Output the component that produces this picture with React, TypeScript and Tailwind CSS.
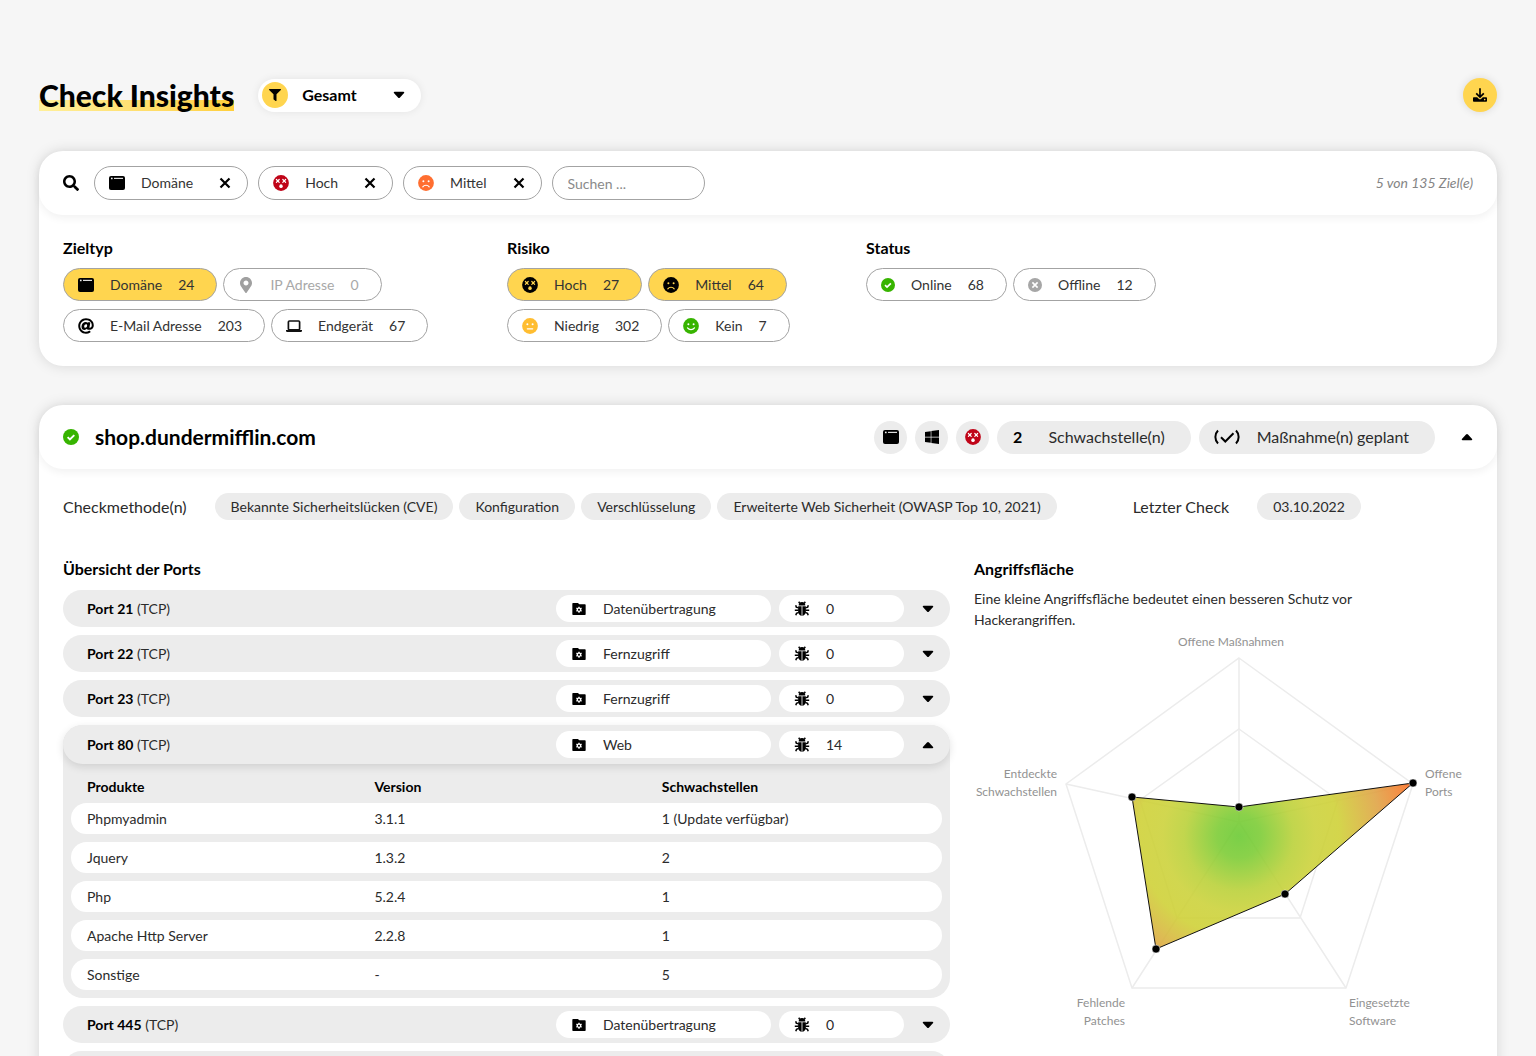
import { useState, type ReactNode } from "react";
import { FaAt, FaFilter, FaMapMarkerAlt, FaSearch, FaWindows } from "react-icons/fa";
import { RiFolderSettingsFill } from "react-icons/ri";
import clsx from "clsx";

type Mood = "high" | "medium" | "low" | "none";

function WindowIcon() {
  return (
    <svg viewBox="0 0 16 16" className="w-4 h-4" aria-hidden="true">
      <rect x="0" y="1" width="16" height="14" rx="2" fill="#000" />
      <circle cx="2.8" cy="3.4" r="0.9" fill="#eee" />
      <path d="M5 3.4h9" stroke="#ddd" strokeWidth="1.2" />
    </svg>
  );
}

function LaptopIcon() {
  return (
    <svg viewBox="0 0 16 16" className="w-4 h-4" aria-hidden="true">
      <rect x="2.4" y="3" width="11.2" height="8.8" rx="1" fill="none" stroke="#111" strokeWidth="1.7" />
      <path d="M0 12h16v.8a1.2 1.2 0 0 1-1.2 1.2H1.2A1.2 1.2 0 0 1 0 12.8z" fill="#111" />
    </svg>
  );
}

function Face({ mood, fill, ink = "#fff" }: { mood: Mood; fill: string; ink?: string }) {
  return (
    <svg viewBox="0 0 16 16" className="w-4 h-4" aria-hidden="true">
      <circle cx="8" cy="8" r="7.9" fill={fill} />
      {mood === "high" ? (
        <g stroke={ink} strokeWidth="1.2" strokeLinecap="round">
          <path d="M3.4 4.5l2.8 2.8M6.2 4.5L3.4 7.300M9.8 4.5l2.8 2.8M12.600 4.5L9.800 7.300" />
          <ellipse cx="8" cy="11.2" rx="1.7" ry="1.9" fill={ink} stroke="none" />
        </g>
      ) : (
        <g fill={ink}>
          <circle cx="5.4" cy="6.2" r="1" />
          <circle cx="10.6" cy="6.2" r="1" />
        </g>
      )}
      <g fill="none" stroke={ink} strokeWidth="1.2" strokeLinecap="round">
        {mood === "medium" && <path d="M4.8 11.8c1.600-2.100 4.800-2.100 6.400 0" />}
        {mood === "low" && <path d="M5.3 10.800h5.400" />}
        {mood === "none" && <path d="M4.5 9.800c1.700 2.300 5.300 2.300 7 0" />}
      </g>
    </svg>
  );
}

function StatusDot({ online, className = "w-4 h-4" }: { online: boolean; className?: string }) {
  return (
    <svg viewBox="0 0 16 16" className={className} aria-hidden="true">
      <circle cx="8" cy="8" r="8" fill={online ? "#37b400" : "#a6a6a6"} />
      <path
        d={online ? "M4.600 8.200l2.300 2.300 4.400-4.400" : "M5 5l6 6M11 5l-6 6"}
        fill="none"
        stroke="#fff"
        strokeWidth="1.9"
      />
    </svg>
  );
}

function BugIcon() {
  return (
    <svg viewBox="0 0 16 16" className="w-4 h-4" aria-hidden="true">
      <path d="M4.7 4.4a3.300 3.300 0 0 1 6.600 0z" />
      <path d="M4.2 5.200h3.400v9.700C5.400 14.600 4.100 12.600 4.100 10zM8.400 5.200h3.400l.1 4.800c0 2.600-1.300 4.600-3.500 4.900z" />
      <path
        d="M5.600 2L4.700.8M10.400 2l.9-1.200M4.600 6.900L2.300 6.100 1.700 4.300M4.400 9.200H.8M4.800 11.400l-2.300.9-.7 2M11.400 6.900l2.300-.8.6-1.800M11.600 9.200h3.600M11.200 11.400l2.300.9.7 2"
        fill="none"
        stroke="#000"
        strokeWidth="1.500"
      />
    </svg>
  );
}

function Caret({ up }: { up?: boolean }) {
  return (
    <svg viewBox="0 0 12 8" className="w-3 h-2" aria-hidden="true">
      <path
        d={
          up
            ? "M1.500 7.200h9a.8.8 0 0 0 .6-1.300L7 1.400a1.400 1.400 0 0 0-2 0L.9 5.900a.8.8 0 0 0 .6 1.300z"
            : "M1.500.8h9a.8.8 0 0 1 .6 1.300L7 6.600a1.400 1.400 0 0 1-2 0L.9 2.100A.8.8 0 0 1 1.500.8z"
        }
      />
    </svg>
  );
}

function DownloadIcon() {
  return (
    <svg viewBox="0 0 16 16" className="w-4 h-4" aria-hidden="true">
      <path d="M1.800 10.200h3.400l1.500 1.500a1.900 1.900 0 0 0 2.600 0l1.500-1.500h3.400c.5 0 .8.400.8.800v3c0 .5-.3.800-.8.800H1.800c-.5 0-.8-.3-.8-.8v-3c0-.4.300-.8.800-.8z" />
      <circle cx="12.700" cy="12.600" r=".8" fill="#ffd54f" />
      <path d="M8 1.200v8.600M4.200 6.400L8 10.100l3.800-3.700" fill="none" stroke="#000" strokeWidth="1.700" />
    </svg>
  );
}

function PlannedIcon() {
  return (
    <svg viewBox="0 0 28 18" className="w-7 h-[18px]" fill="none" stroke="#000" strokeWidth="2" aria-hidden="true">
      <path d="M5 2.500C1.500 6 1.500 12 5 15.500M23 2.500c3.500 3.500 3.500 9.500 0 13M8 9.200l4.300 4.300L20.500 5.300" />
    </svg>
  );
}

function ActiveFilter({ icon, label, onRemove }: { icon: ReactNode; label: string; onRemove: () => void }) {
  return (
    <span className="flex items-center h-[34px] pl-[14px] pr-4 rounded-full border border-[#a3a3a3]">
      {icon}
      <span className="ml-4 mr-[26px] text-[#333]">{label}</span>
      <button type="button" onClick={onRemove} aria-label={`${label} entfernen`} className="grid place-items-center w-3 h-4">
        <svg viewBox="0 0 12 12" className="w-3 h-3" aria-hidden="true">
          <path d="M1.500 1.500l9 9M10.500 1.500l-9 9" stroke="#000" strokeWidth="2.200" />
        </svg>
      </button>
    </span>
  );
}

function Chip({
  icon,
  label,
  count,
  active,
  disabled,
  onClick,
}: {
  icon: ReactNode;
  label: string;
  count: number;
  active?: boolean;
  disabled?: boolean;
  onClick?: () => void;
}) {
  return (
    <button
      type="button"
      disabled={disabled}
      aria-pressed={active}
      onClick={onClick}
      className={clsx(
        "flex items-center gap-4 h-[33px] pl-[14px] pr-[22px] rounded-full border border-[#a3a3a3]",
        active && "bg-[#ffd54f]",
        disabled ? "text-[#a8a8a8]" : "text-[#333]",
      )}
    >
      {icon}
      <span>{label}</span>
      <span>{count}</span>
    </button>
  );
}

function FilterGroup({ title, children }: { title: string; children: ReactNode }) {
  return (
    <section>
      <h2 className="text-base font-bold leading-6 text-black">{title}</h2>
      <div className="mt-2 flex flex-col gap-2">{children}</div>
    </section>
  );
}

const row = "flex flex-wrap gap-[6px]";

function Port({ port, service, count, open }: { port: number; service: string; count: number; open?: boolean }) {
  return (
    <div
      className={clsx(
        "flex items-center gap-2 pl-6 pr-4 rounded-[20px] bg-[#ececec]",
        open ? "h-[39px] shadow-[0_3px_8px_rgba(0,0,0,0.12)]" : "h-[37px]",
      )}
    >
      <h3 className="flex-1">
        <span className="font-bold text-black">Port {port}</span> (TCP)
      </h3>
      <span className="flex items-center gap-4 w-[215px] h-[27px] pl-[15px] rounded-full bg-white">
        <RiFolderSettingsFill className="w-4 h-4 text-black" />
        {service}
      </span>
      <span className="flex items-center gap-4 w-[125px] h-[27px] pl-[15px] rounded-full bg-white">
        <BugIcon />
        {count}
      </span>
      <button type="button" aria-expanded={!!open} aria-label={`Port ${port}`} className="grid place-items-center w-3 h-4 ml-[10px]">
        <Caret up={open} />
      </button>
    </div>
  );
}

const products = [
  ["Phpmyadmin", "3.1.1", "1 (Update verfügbar)"],
  ["Jquery", "1.3.2", "2"],
  ["Php", "5.2.4", "1"],
  ["Apache Http Server", "2.2.8", "1"],
  ["Sonstige", "-", "5"],
];

function ProductTable() {
  return (
    <table className="w-full table-fixed border-separate border-spacing-x-0 border-spacing-y-2 text-left">
      <thead>
        <tr className="h-[23px] align-bottom leading-4 text-black">
          <th className="w-[33%] pl-4 font-bold">Produkte</th>
          <th className="w-[33%] pl-4 font-bold">Version</th>
          <th className="pl-4 font-bold">Schwachstellen</th>
        </tr>
      </thead>
      <tbody>
        {products.map(([name, version, issues]) => (
          <tr key={name} className="h-[31px]">
            <td className="pl-4 rounded-l-full bg-white">{name}</td>
            <td className="pl-4 bg-white">{version}</td>
            <td className="pl-4 rounded-r-full bg-white">{issues}</td>
          </tr>
        ))}
      </tbody>
    </table>
  );
}

const points = [
  [265, 177],
  [439, 153],
  [311, 264],
  [182, 319],
  [158, 167],
];

function Radar() {
  return (
    <svg viewBox="0 0 499 406" className="w-full" role="img" aria-label="Angriffsfläche">
      <defs>
        <radialGradient id="risk" gradientUnits="userSpaceOnUse" cx="265" cy="206" r="182">
          <stop offset="0" stopColor="#68c92f" />
          <stop offset="0.12" stopColor="#7acb31" />
          <stop offset="0.3" stopColor="#b9d035" />
          <stop offset="0.42" stopColor="#cbd137" />
          <stop offset="0.55" stopColor="#ced033" />
          <stop offset="0.78" stopColor="#dfa141" />
          <stop offset="1" stopColor="#ff6a1f" />
        </radialGradient>
      </defs>
      <g fill="none" stroke="#ececec" strokeWidth="1.500">
        <path d="M265 28L439 154 372 358H158L92 154z" />
        <path d="M265 99L364 170 326 288H203L166 170z" />
        <path d="M265 192V28M265 192l174-38M265 192l107 166M265 192L158 358M265 192L92 154" />
      </g>
      <polygon
        points={points.map((p) => p.join(",")).join(" ")}
        fill="url(#risk)"
        fillOpacity="0.88"
        stroke="#111"
        strokeWidth="1"
      />
      {points.map(([x, y]) => (
        <circle key={x} cx={x} cy={y} r="4" stroke="#fff" strokeWidth="0.500" />
      ))}
      <g className="text-xs" fill="#929292">
        <text x="257" y="16" textAnchor="middle">Offene Maßnahmen</text>
        <text x="451" y="148">Offene</text>
        <text x="451" y="166">Ports</text>
        <text x="375" y="377">Eingesetzte</text>
        <text x="375" y="395">Software</text>
        <text x="151" y="377" textAnchor="end">Fehlende</text>
        <text x="151" y="395" textAnchor="end">Patches</text>
        <text x="83" y="148" textAnchor="end">Entdeckte</text>
        <text x="83" y="166" textAnchor="end">Schwachstellen</text>
      </g>
    </svg>
  );
}

const methods = [
  "Bekannte Sicherheitslücken (CVE)",
  "Konfiguration",
  "Verschlüsselung",
  "Erweiterte Web Sicherheit (OWASP Top 10, 2021)",
];

const card = "rounded-3xl bg-white shadow-[0_0_14px_rgba(0,0,0,0.13)]";
const cardHeader = "flex items-center h-16 px-6 rounded-3xl shadow-[0_3px_8px_rgba(0,0,0,0.06)]";
const circle = "grid place-items-center w-[33px] h-[33px] rounded-full bg-[#ececec]";
const tag = "flex items-center h-[27px] px-4 rounded-full bg-[#ececec]";

const activeFilters = [
  { label: "Domäne", icon: <WindowIcon /> },
  { label: "Hoch", icon: <Face mood="high" fill="#c00418" /> },
  { label: "Mittel", icon: <Face mood="medium" fill="#ff6e30" /> },
];

export default function App() {
  const [filters, setFilters] = useState(activeFilters);
  const has = (label: string) => filters.some((f) => f.label === label);
  const toggle = (label: string) =>
    setFilters(activeFilters.filter((f) => (f.label === label ? !has(label) : has(f.label))));

  return (
    <div className="min-h-screen bg-[#f6f6f6] px-[39px] pt-[78px] pb-10 font-['Lato',sans-serif] text-sm text-[#2b2b2b]">
      <header className="flex items-center h-[34px]">
        <h1 className="text-[30px] leading-8 font-black text-black bg-linear-to-r from-[#fff09a] to-[#ffcf3a] bg-[length:100%_11px] bg-bottom bg-no-repeat">
          Check Insights
        </h1>
        <label className="relative flex items-center ml-6 h-[33px] w-[163px] rounded-full bg-white text-black shadow-[0_0_8px_rgba(0,0,0,0.08)]">
          <span className="grid place-items-center ml-1 w-[26px] h-[26px] rounded-full bg-[#ffd54f]">
            <FaFilter className="w-3 h-3" />
          </span>
          <select aria-label="Filter" className="flex-1 h-full pl-[14px] appearance-none text-base font-bold">
            <option>Gesamt</option>
          </select>
          <span className="absolute right-4 pointer-events-none">
            <Caret />
          </span>
        </label>
        <button
          type="button"
          aria-label="Herunterladen"
          className="ml-auto grid place-items-center w-[34px] h-[34px] rounded-full bg-[#ffd54f] shadow-[0_0_8px_rgba(0,0,0,0.12)]"
        >
          <DownloadIcon />
        </button>
      </header>

      <section className={clsx(card, "mt-[39px]")}>
        <div className={clsx(cardHeader, "gap-[10px]")}>
          <FaSearch className="w-4 h-4 mr-[5px] text-black" />
          {filters.map((f) => (
            <ActiveFilter key={f.label} icon={f.icon} label={f.label} onRemove={() => toggle(f.label)} />
          ))}
          <input
            type="text"
            aria-label="Suchen"
            placeholder="Suchen ..."
            className="w-[153px] h-[34px] px-[15px] rounded-full border border-[#a3a3a3] placeholder:text-[#8a8a8a]"
          />
          <span className="ml-auto italic text-[#858585]">5 von 135 Ziel(e)</span>
        </div>
        <div className="grid grid-cols-[444fr_359fr_607fr] px-6 pt-[21px] pb-6">
          <FilterGroup title="Zieltyp">
            <div className={row}>
              <Chip icon={<WindowIcon />} label="Domäne" count={24} active={has("Domäne")} onClick={() => toggle("Domäne")} />
              <Chip icon={<FaMapMarkerAlt className="w-4 h-4 text-[#a0a0a0]" />} label="IP Adresse" count={0} disabled />
            </div>
            <div className={row}>
              <Chip icon={<FaAt className="w-4 h-4 text-black" />} label="E-Mail Adresse" count={203} />
              <Chip icon={<LaptopIcon />} label="Endgerät" count={67} />
            </div>
          </FilterGroup>
          <FilterGroup title="Risiko">
            <div className={row}>
              <Chip icon={<Face mood="high" fill="#000" ink="#ffd54f" />} label="Hoch" count={27} active={has("Hoch")} onClick={() => toggle("Hoch")} />
              <Chip icon={<Face mood="medium" fill="#000" ink="#ffd54f" />} label="Mittel" count={64} active={has("Mittel")} onClick={() => toggle("Mittel")} />
            </div>
            <div className={row}>
              <Chip icon={<Face mood="low" fill="#ffbd30" />} label="Niedrig" count={302} />
              <Chip icon={<Face mood="none" fill="#37b400" />} label="Kein" count={7} />
            </div>
          </FilterGroup>
          <FilterGroup title="Status">
            <div className={row}>
              <Chip icon={<StatusDot online className="w-[14px] h-[14px]" />} label="Online" count={68} />
              <Chip icon={<StatusDot online={false} className="w-[14px] h-[14px]" />} label="Offline" count={12} />
            </div>
          </FilterGroup>
        </div>
      </section>

      <section className={clsx(card, "mt-[39px] pb-10")}>
        <div className={clsx(cardHeader, "gap-2 text-base")}>
          <StatusDot online />
          <h2 className="ml-2 mr-auto text-[21px] font-bold text-black">shop.dundermifflin.com</h2>
          <span className={circle}>
            <WindowIcon />
          </span>
          <span className={circle}>
            <FaWindows className="w-4 h-4 text-black" />
          </span>
          <span className={circle}>
            <Face mood="high" fill="#c00418" />
          </span>
          <span className="flex items-center gap-[26px] h-[33px] pl-4 pr-[26px] rounded-full bg-[#ececec]">
            <b className="text-black">2</b>
            Schwachstelle(n)
          </span>
          <span className="flex items-center gap-4 h-[33px] pl-[14px] pr-[26px] rounded-full bg-[#ececec]">
            <PlannedIcon />
            Maßnahme(n) geplant
          </span>
          <button type="button" aria-expanded="true" aria-label="Details" className="grid place-items-center w-3 h-4 ml-[18px]">
            <Caret up />
          </button>
        </div>

        <div className="flex items-center gap-7 px-6 mt-6">
          <span className="text-base">Checkmethode(n)</span>
          <ul className="flex gap-[6px]">
            {methods.map((m) => (
              <li key={m} className={tag}>
                {m}
              </li>
            ))}
          </ul>
          <span className="ml-12 text-base">Letzter Check</span>
          <span className={tag}>03.10.2022</span>
        </div>

        <div className="grid grid-cols-[887fr_499fr] gap-6 px-6 mt-[37px]">
          <section>
            <h2 className="text-base font-bold leading-6 text-black">Übersicht der Ports</h2>
            <div className="mt-[9px] flex flex-col gap-2">
              <Port port={21} service="Datenübertragung" count={0} />
              <Port port={22} service="Fernzugriff" count={0} />
              <Port port={23} service="Fernzugriff" count={0} />
              <div className="rounded-[20px] bg-[#ececec]">
                <Port port={80} service="Web" count={14} open />
                <div className="px-2">
                  <ProductTable />
                </div>
              </div>
              <Port port={445} service="Datenübertragung" count={0} />
              <Port port={3306} service="Datenbank" count={0} />
            </div>
          </section>
          <section>
            <h2 className="text-base font-bold leading-6 text-black">Angriffsfläche</h2>
            <p className="mt-[7px] max-w-[400px] leading-[21px]">
              Eine kleine Angriffsfläche bedeutet einen besseren Schutz vor Hackerangriffen.
            </p>
            <Radar />
          </section>
        </div>
      </section>
    </div>
  );
}
